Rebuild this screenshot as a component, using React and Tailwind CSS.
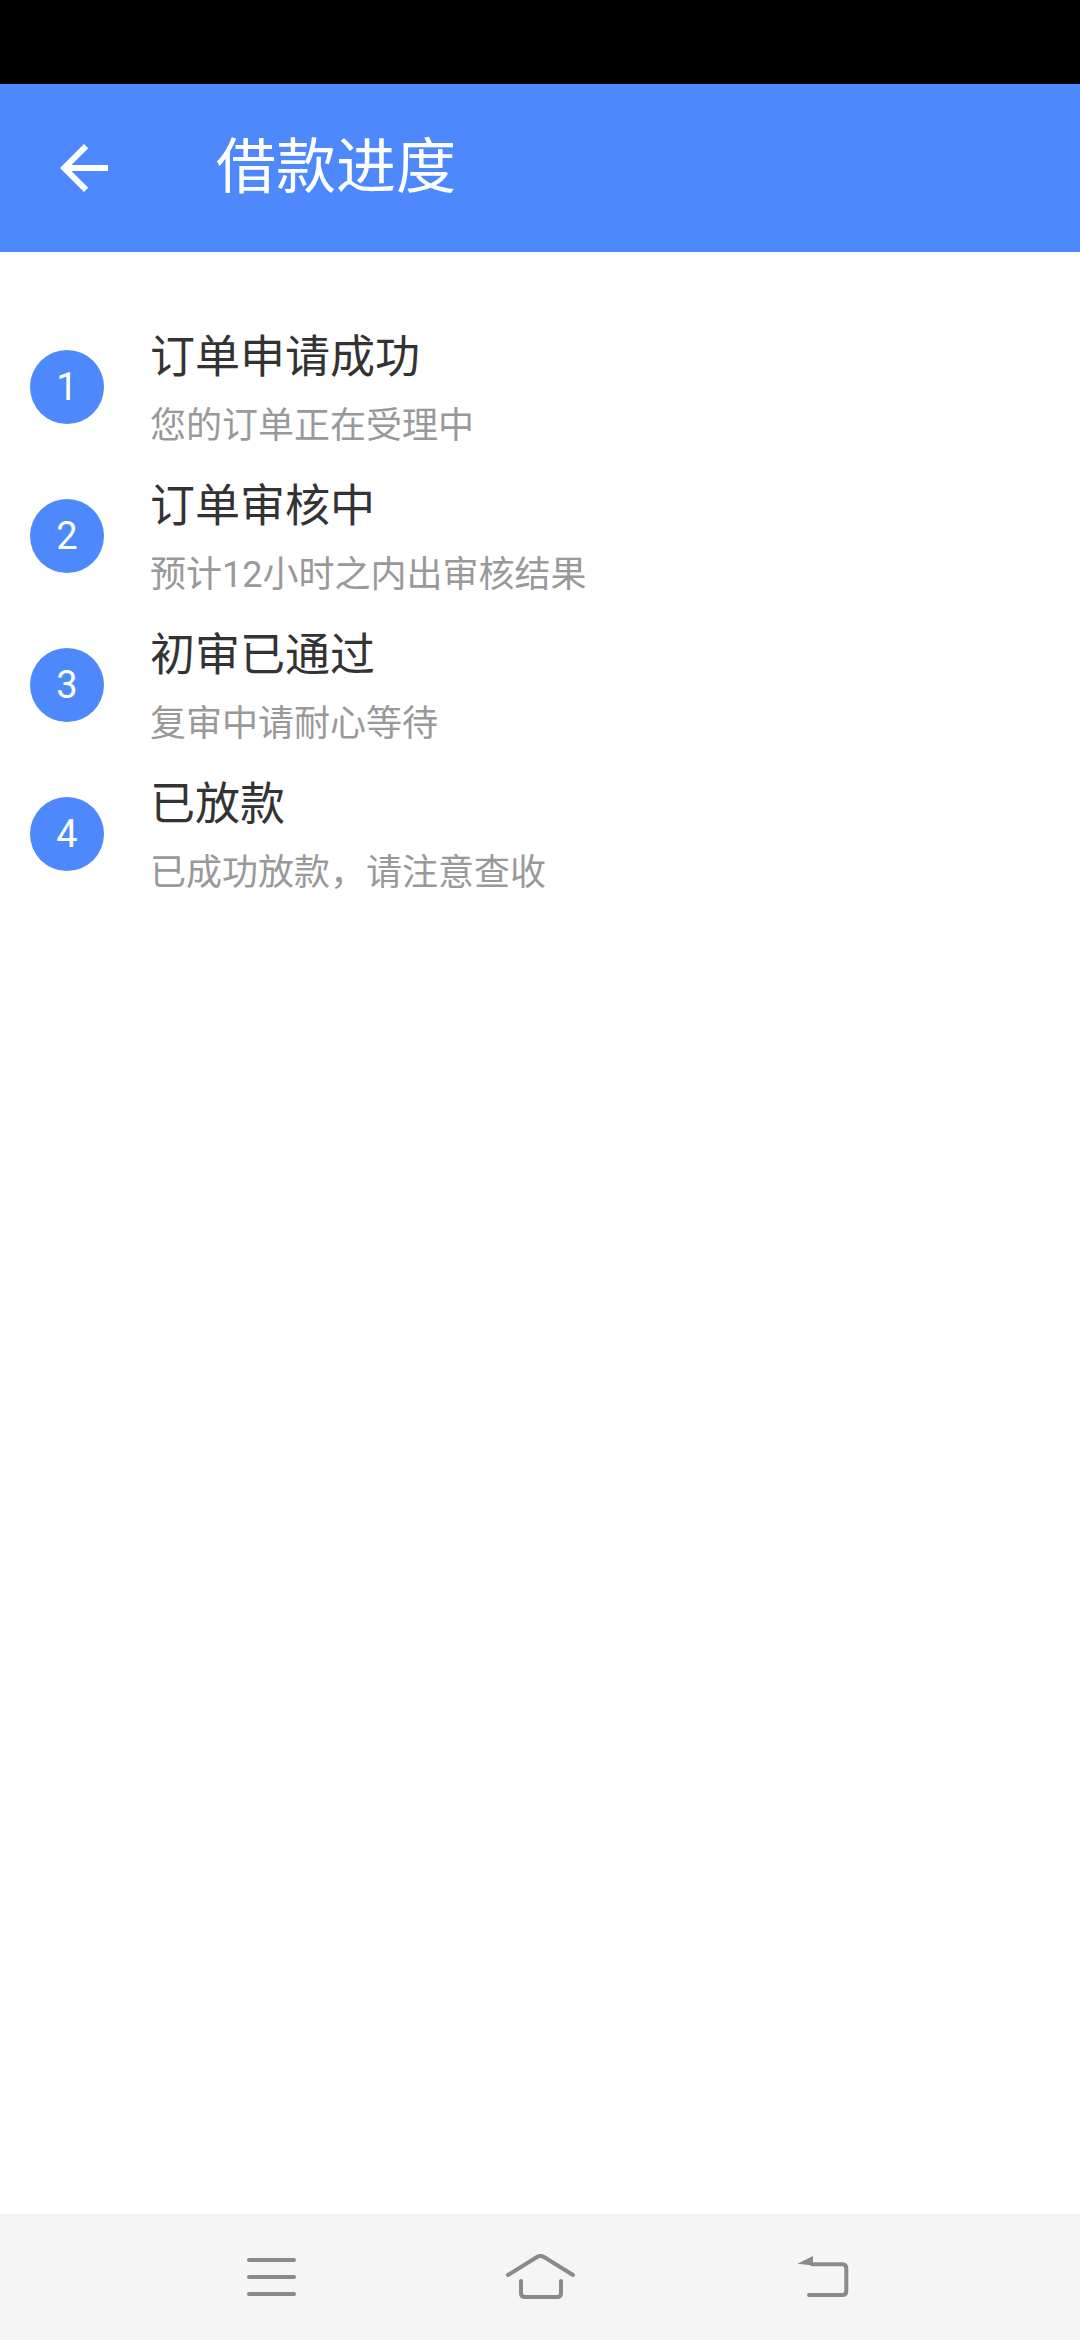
import React from 'react';

const steps = [
  { no: 1, title: '订单申请成功', desc: '您的订单正在受理中' },
  { no: 2, title: '订单审核中', desc: '预计12小时之内出审核结果' },
  { no: 3, title: '初审已通过', desc: '复审中请耐心等待' },
  { no: 4, title: '已放款', desc: '已成功放款，请注意查收' },
];

const font = { fontFamily: 'Roboto, "Noto Sans CJK SC", sans-serif' };

const StepRow = ({ step }) => (
  <div className="flex items-center h-[149px]">
    <div className="ml-[30px] w-[74px] h-[74px] rounded-full bg-[#4d88fc] flex items-center justify-center text-white text-[38px] leading-none">
      {step.no}
    </div>
    <div className="ml-[46px] flex flex-col">
      <span className="text-[45px] leading-[64px] text-[#333333]">{step.title}</span>
      <span className="mt-[14px] text-[36px] leading-[44px] text-[#999999]">{step.desc}</span>
    </div>
  </div>
);

const App = () => {
  return (
    <div className="w-[1080px] h-[2340px] bg-white flex flex-col" style={font}>
      {/* status bar */}
      <div className="h-[84px] bg-black" />

      {/* toolbar */}
      <div className="h-[168px] bg-[#4d88fc] flex items-center">
        <button className="ml-[48px] w-[72px] h-[72px] flex items-center justify-center">
          <svg viewBox="0 0 24 24" className="w-[72px] h-[72px]" fill="#ffffff">
            <path d="M20 11H7.83l5.59-5.59L12 4l-8 8 8 8 1.41-1.41L7.83 13H20v-2z" />
          </svg>
        </button>
        <span className="ml-[96px] text-white text-[60px] leading-none">借款进度</span>
      </div>

      {/* steps */}
      <div className="flex-1 pt-[60px]">
        {steps.map((s) => (
          <StepRow key={s.no} step={s} />
        ))}
      </div>

      {/* nav bar */}
      <div className="h-[126px] bg-[#f5f5f5] flex items-center">
        <svg width="54" height="42" viewBox="0 0 54 42" className="ml-[245px]" stroke="#8a8a8a" strokeWidth="4" strokeLinecap="round" fill="none">
          <path d="M4 4H49M4 21H49M4 38H49" />
        </svg>
        <svg width="74" height="52" viewBox="0 0 74 52" className="ml-[205px]" stroke="#8a8a8a" strokeWidth="4" strokeLinecap="round" strokeLinejoin="round" fill="none">
          <path d="M4 24L33 6Q36.5 4 40 6L69 24" />
          <path d="M17 30V42Q17 46 21 46H53Q57 46 57 42V30" />
        </svg>
        <svg width="58" height="48" viewBox="0 0 58 48" className="ml-[217px]" fill="none">
          <path d="M18 3L2.5 10.7L18 12.5Z" fill="#8a8a8a" />
          <path d="M17 11.3H47.3Q51.3 11.3 51.3 15.3V38Q51.3 42 47.3 42H14" stroke="#8a8a8a" strokeWidth="4" strokeLinecap="round" />
        </svg>
      </div>
    </div>
  );
};

export default App;
